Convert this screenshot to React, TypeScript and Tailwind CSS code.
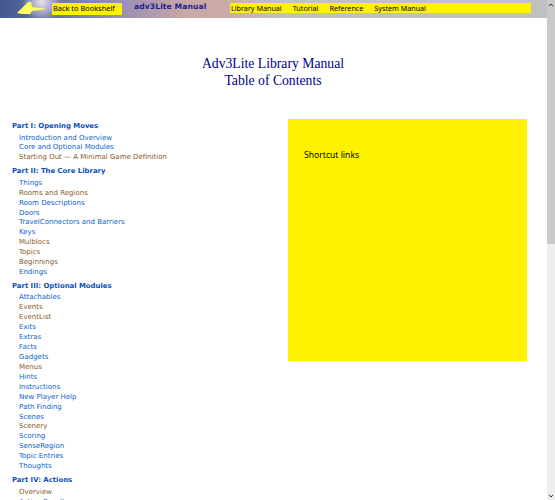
const C = "text-[#0b62cc]";
const B = "text-[#8a5a1c]";
type Item = [string, boolean?];
const parts: { title: string; items: Item[] }[] = [
  { title: "Part I: Opening Moves", items: [["Introduction and Overview"], ["Core and Optional Modules"], ["Starting Out — A Minimal Game Definition", true]] },
  { title: "Part II: The Core Library", items: [["Things"], ["Rooms and Regions", true], ["Room Descriptions"], ["Doors"], ["TravelConnectors and Barriers"], ["Keys"], ["Mulblocs", true], ["Topics", true], ["Beginnings", true], ["Endings"]] },
  { title: "Part III: Optional Modules", items: [["Attachables"], ["Events", true], ["EventList", true], ["Exits"], ["Extras"], ["Facts"], ["Gadgets"], ["Menus", true], ["Hints"], ["Instructions"], ["New Player Help"], ["Path Finding"], ["Scenes"], ["Scenery", true], ["Scoring"], ["SenseRegion"], ["Topic Entries"], ["Thoughts"]] },
  { title: "Part IV: Actions", items: [["Overview", true], ["Action Results"]] },
];
const nav = ["Library Manual", "Tutorial", "Reference", "System Manual"];
export default function App() {
  return (
    <div className="flex h-[500px] overflow-hidden bg-white font-['DejaVu_Sans',sans-serif]">
      <div className="flex min-w-0 flex-1 flex-col">
        <div className="flex h-[18px] shrink-0 items-start bg-[radial-gradient(circle_at_42px_2px,#e8e4ee_0,#b0aecb_9px,transparent_20px),linear-gradient(90deg,#43598f_0%,#6a73a6_10%,#8f8fb5_20%,#a996ae_26%,#c9a9a6_34%,#cba9a4_40%,#c4b4bc_46%,#c0c0c0_52%,#c0c0c0_100%)]">
          <svg width="52" height="18" viewBox="0 0 52 18" className="shrink-0">
            <path d="M17 13 L28 2 L31 2 L32 7 L47 9 L32 11 L30 14 L22 14 Z" fill="#ffff66" />
          </svg>
          <a className="mt-[3px] flex h-[12px] w-[70px] shrink-0 items-center whitespace-nowrap bg-[#fff200] pl-px font-['Noto_Sans',sans-serif] text-[7.4px] text-black">Back to Bookshelf</a>
          <span className="ml-[12px] w-[96px] shrink-0 whitespace-nowrap pt-px text-[7.6px] font-bold leading-[12px] tracking-[0.1px] text-[#1c1f8f]">adv3Lite Manual</span>
          <div className="mt-[3px] flex h-[10px] w-[301px] shrink-0 items-center gap-[11px] whitespace-nowrap bg-[#fff200] pl-px font-['Noto_Sans',sans-serif] text-[7.2px] text-black">
            {nav.map((n) => <span key={n}>{n}</span>)}
          </div>
        </div>
        <div className="flex min-h-0 flex-1">
          <div className="min-w-0 flex-1 pl-[12px]">
            <h1 className="mt-[37px] w-[522px] text-center font-['Liberation_Serif',serif] text-[13.7px] font-normal leading-[17px] text-[#000090]">
              Adv3Lite Library Manual<br />Table of Contents
            </h1>
            <div className="flex">
              <nav className="mt-[31px] w-[276px] shrink-0 text-[7px]">
                {parts.map((p) => (
                  <div key={p.title} className="mb-[3px]">
                    <div className="mb-[0.5px] h-[12px] text-[6.9px] font-bold leading-[12px] text-[#0a4fb8]">{p.title}</div>
                    {p.items.map(([t, brown]) => (
                      <div key={t} className={`h-[9.93px] whitespace-nowrap pl-[7px] leading-[10px] ${brown ? B : C}`}>{t}</div>
                    ))}
                  </div>
                ))}
              </nav>
              <aside className="mt-[30px] h-[242px] w-[239px] shrink-0 bg-[#fff200] px-[16px] pt-[30px] font-['Noto_Sans',sans-serif] text-[8.6px] leading-[12px] text-black">Shortcut links</aside>
            </div>
          </div>
        </div>
      </div>
      <div className="flex w-[8px] shrink-0 flex-col bg-[#eeeeee]">
        <div className="flex h-[244px] justify-center bg-[#c9c9c9] pt-[3px]">
          <svg width="6" height="4" viewBox="0 0 6 4" fill="none" stroke="#333" strokeWidth="1"><path d="M1 3.2 L3 1 L5 3.2" /></svg>
        </div>
        <div className="flex flex-1 items-end justify-center pb-[2px]">
          <svg width="6" height="4" viewBox="0 0 6 4" fill="none" stroke="#333" strokeWidth="1"><path d="M1 0.8 L3 3 L5 0.8" /></svg>
        </div>
      </div>
    </div>
  );
}
